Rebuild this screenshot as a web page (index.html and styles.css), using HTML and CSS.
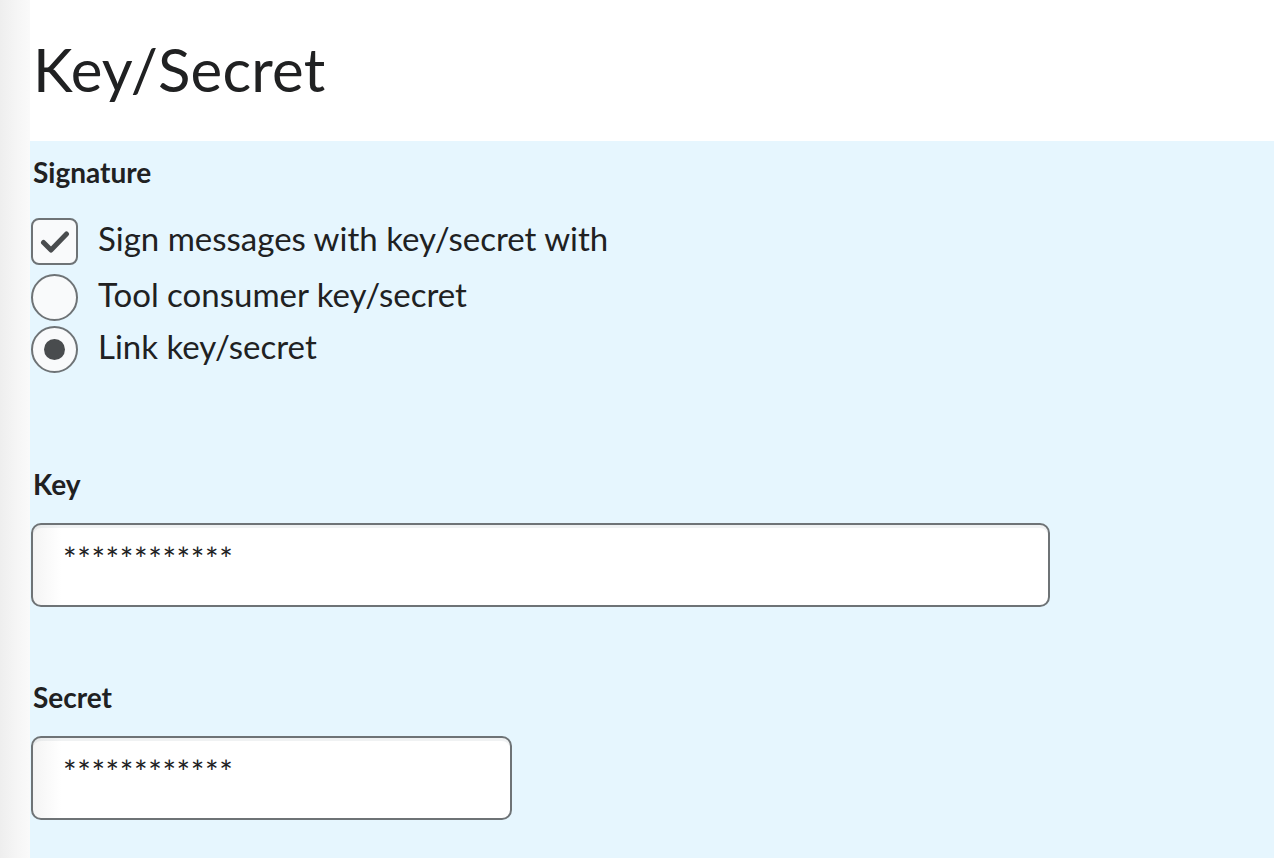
FILE: index.html
```html
<!DOCTYPE html>
<html lang="en">

<head>
    <meta charset="UTF-8">
    <meta name="viewport" content="width=device-width, initial-scale=1.0">
    <title>Key/Secret</title>
    <link rel="stylesheet" href="styles.css">
</head>

<body>
    <div class="page">
        <div class="gutter"></div>

        <div class="content">
            <h1 class="title">Key/Secret</h1>

            <div class="panel">
                <h2 class="label">Signature</h2>

                <div class="choices">
                    <label class="choice">
                        <span class="checkbox">
                            <svg width="30" height="24" viewBox="0 0 30 24">
                                <path d="M3.5 12.5 L11 20 L26.5 4" fill="none" stroke="#494c4e" stroke-width="5" stroke-linecap="round" stroke-linejoin="round"/>
                            </svg>
                        </span>
                        <span class="choice-text">Sign messages with key/secret with</span>
                    </label>

                    <label class="choice radio-row">
                        <span class="radio"></span>
                        <span class="choice-text">Tool consumer key/secret</span>
                    </label>

                    <label class="choice radio-row">
                        <span class="radio checked"></span>
                        <span class="choice-text">Link key/secret</span>
                    </label>
                </div>

                <div class="field field-key">
                    <h2 class="label">Key</h2>
                    <div class="input input-wide">************</div>
                </div>

                <div class="field field-secret">
                    <h2 class="label">Secret</h2>
                    <div class="input input-narrow">************</div>
                </div>
            </div>
        </div>
    </div>
</body>

</html>
```

FILE: styles.css
```css
* {
    margin: 0;
    padding: 0;
    box-sizing: border-box;
}

body {
    font-family: Lato, "Open Sans", "Liberation Sans", sans-serif;
    color: #202122;
    background: #fff;
}

.page {
    display: flex;
    min-height: 858px;
}

.gutter {
    width: 30px;
    flex-shrink: 0;
    background: linear-gradient(to right, #eeeeee 0%, #f6f6f6 60%, #fafafa 100%);
}

.content {
    flex: 1;
    display: flex;
    flex-direction: column;
}

.title {
    font-size: 60px;
    font-weight: 400;
    line-height: 72px;
    height: 141px;
    padding: 33px 0 0 3px;
    letter-spacing: 0.2px;
}

.panel {
    flex: 1;
    background: #e6f6fe;
    padding: 14px 0 30px 3px;
}

.label {
    font-size: 28px;
    font-weight: 700;
    line-height: 34px;
}

.choices {
    margin-top: 29px;
    margin-left: -2px;
}

.choice {
    display: flex;
    align-items: center;
    gap: 20px;
}

.radio-row {
    margin-top: 9px;
}

.radio-row + .radio-row {
    margin-top: 5px;
}

.choice-text {
    font-size: 33px;
    line-height: 40px;
    margin-top: -8px;
}

.checkbox {
    width: 47px;
    height: 47px;
    border: 2px solid #6e7376;
    border-radius: 8px;
    background: #f9fafb;
    display: flex;
    align-items: center;
    justify-content: center;
}

.radio {
    width: 47px;
    height: 47px;
    border: 2px solid #6e7376;
    border-radius: 50%;
    background: #f9fafb;
    display: flex;
    align-items: center;
    justify-content: center;
}

.radio.checked::after {
    content: "";
    width: 21px;
    height: 21px;
    border-radius: 50%;
    background: #494c4e;
}

.field-key {
    margin-top: 94px;
}

.field-secret {
    margin-top: 73px;
}

.input {
    margin-top: 22px;
    margin-left: -2px;
    height: 84px;
    border: 2px solid #6e7376;
    border-radius: 10px;
    background: linear-gradient(to right, #f4f4f4 0px, #fff 28px);
    box-shadow: inset 0 3px 0 0 rgba(181, 189, 194, 0.2);
    padding: 14px 0 0 30px;
    font-size: 32px;
    line-height: 40px;
    letter-spacing: 0.6px;
    color: #202122;
}

.input-wide {
    width: 1019px;
}

.input-narrow {
    width: 481px;
}
```
